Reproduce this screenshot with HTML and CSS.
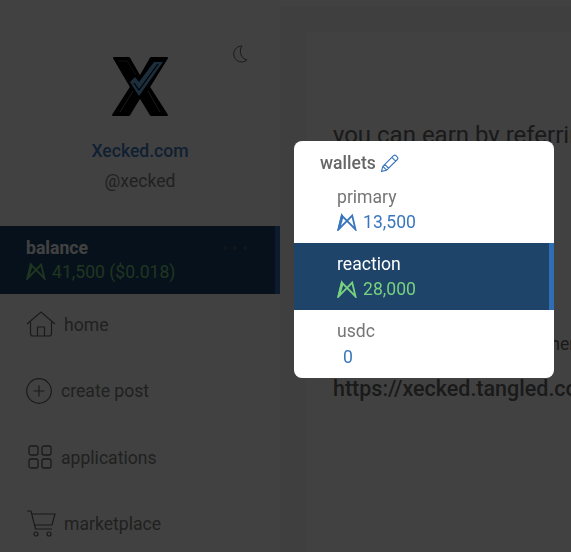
FILE: index.html
```html
<!DOCTYPE html>
<html lang="en">
  <head>
    <meta charset="UTF-8" />
    <title>Xecked wallets</title>
    <link rel="stylesheet" href="styles.css">
  </head>
  <body>
    <div class="topbar"></div>
    <div class="page">
      <aside class="sidebar">
        <div class="profile">
          <svg class="logo" viewBox="0 0 56 60" width="56" height="60">
            <path d="M2 1H17L28 20L39 1H55L37 30L55 58H39L28 40L17 58H1L19 30Z" fill="#000" stroke="#000" stroke-width="2" stroke-linejoin="round"/>
            <path d="M6 4H15L24 18" fill="none" stroke="#303c46" stroke-width="1"/>
            <path d="M8 55L21 34M36 34L48 55" fill="none" stroke="#77838c" stroke-width=".8"/>
            <path d="M18 25L27 39L51 5H42L27 25L23 20Z" fill="#6fb4e6"/>
            <path d="M22 26L27 33L46 7" fill="none" stroke="#000" stroke-width="1.200"/>
          </svg>
          <svg class="moon" viewBox="0 0 16 18" width="16" height="18">
            <path d="M10 1A8 8 0 1 0 15 15A9 9 0 0 1 10 1Z" fill="none" stroke="#666" stroke-width="1"/>
          </svg>
          <div class="site-name">Xecked.com</div>
          <div class="handle">@xecked</div>
        </div>
        <div class="balance">
          <div class="balance-text">
            <div class="balance-label">balance</div>
            <div class="balance-amount">
              <svg class="token" viewBox="0 0 20 18" width="20" height="18"><use href="#token"/></svg>
              41,500 ($0.018)
            </div>
          </div>
          <div class="dots">
            <span></span><span></span><span></span>
          </div>
        </div>
        <nav class="nav">
          <a class="nav-item">
            <svg viewBox="0 0 30 26" width="30" height="26" class="nav-icon">
              <path d="M1 13L15 1L29 13M4.500 11V22.500Q4.500 25 7 25H23Q25.500 25 25.500 22.500V11M11.500 25V16H18.500V25" fill="none" stroke="#666" stroke-width="1.200"/>
            </svg>
            <span>home</span>
          </a>
          <a class="nav-item">
            <svg viewBox="0 0 26 26" width="26" height="26" class="nav-icon nav-icon-plus">
              <circle cx="13" cy="13" r="12.300" fill="none" stroke="#666" stroke-width="1.200"/>
              <path d="M13 7.500V18.500M7.500 13H18.500" stroke="#666" stroke-width="1.200"/>
            </svg>
            <span>create post</span>
          </a>
          <a class="nav-item">
            <svg viewBox="0 0 24 24" width="24" height="24" class="nav-icon nav-icon-apps">
              <rect x="1" y="1" width="9" height="9" rx="2" fill="none" stroke="#666" stroke-width="1.300"/>
              <rect x="14" y="1" width="9" height="9" rx="2" fill="none" stroke="#666" stroke-width="1.300"/>
              <rect x="1" y="14" width="9" height="9" rx="2" fill="none" stroke="#666" stroke-width="1.300"/>
              <rect x="14" y="14" width="9" height="9" rx="2" fill="none" stroke="#666" stroke-width="1.300"/>
            </svg>
            <span>applications</span>
          </a>
          <a class="nav-item">
            <svg viewBox="0 0 30 27" width="30" height="27" class="nav-icon">
              <path d="M1 1H5L9.500 19H26M6 4H29L26 15H8.500" fill="none" stroke="#666" stroke-width="1.200"/>
              <circle cx="10" cy="24" r="2" fill="none" stroke="#666" stroke-width="1.200"/>
              <circle cx="23" cy="24" r="2" fill="none" stroke="#666" stroke-width="1.200"/>
            </svg>
            <span>marketplace</span>
          </a>
        </nav>
      </aside>
      <div class="content-wrap">
        <main class="content">
          <p class="earn">you can earn by referring your friends</p>
          <p class="share">share this link with others whenever</p>
          <p class="ref-link">https://xecked.tangled.com</p>
        </main>
      </div>
    </div>

    <div class="overlay"></div>

    <div class="wallets">
      <div class="wallets-title">
        wallets
        <svg viewBox="0 0 20 20" width="19" height="19">
          <path d="M1.500 18.500L3 13L14.500 1.500Q15.500 .8 16.500 1.500L18.500 3.500Q19.200 4.500 18.500 5.500L7 17ZM3 13L7 17M12.500 3.500L16.500 7.500M5 11L9 15" fill="none" stroke="#3a76bd" stroke-width="1.200" stroke-linejoin="round"/>
        </svg>
      </div>
      <div class="wallet">
        <div class="wallet-name">primary</div>
        <div class="wallet-amount">
          <svg class="token" viewBox="0 0 20 18" width="20" height="18"><use href="#token"/></svg>
          13,500
        </div>
      </div>
      <div class="wallet wallet-active">
        <div class="wallet-name">reaction</div>
        <div class="wallet-amount">
          <svg class="token" viewBox="0 0 20 18" width="20" height="18"><use href="#token"/></svg>
          28,000
        </div>
      </div>
      <div class="wallet">
        <div class="wallet-name">usdc</div>
        <div class="wallet-amount wallet-amount-plain">0</div>
      </div>
    </div>

    <svg class="defs" width="0" height="0">
      <defs>
        <g id="token">
          <path d="M1.500 16.500L4.800 2.500L18.500 16.500L15.200 2.500Z" fill="none" stroke="currentColor" stroke-width="1.800" stroke-linejoin="miter"/>
          <path d="M0 18L4.500 0L6.500 4L3 16Z" fill="currentColor"/>
        </g>
      </defs>
    </svg>
  </body>
</html>
```

FILE: styles.css
```css
* {
  margin: 0;
  padding: 0;
  box-sizing: border-box;
}

html,
body {
  height: 552px;
  overflow: hidden;
}

body {
  background-color: #fff;
  font-family: "Roboto", "Liberation Sans", sans-serif;
  font-size: 17.6px;
  color: #808080;
}

.topbar {
  height: 7px;
}

.page {
  display: flex;
  height: 545px;
}

.sidebar {
  width: 280px;
  flex-shrink: 0;
  background: #fff;
}

.profile {
  position: relative;
  display: flex;
  flex-direction: column;
  align-items: center;
  height: 219px;
  padding-top: 50px;
}

.logo {
  margin-bottom: 22px;
}

.moon {
  position: absolute;
  top: 38px;
  left: 232px;
}

.site-name {
  font-weight: 500;
  color: #3f7dc5;
  line-height: 24px;
  margin-bottom: 6px;
}

.handle {
  line-height: 24px;
}

.balance {
  display: flex;
  justify-content: space-between;
  height: 68px;
  padding: 10px 28px 0 26px;
  background: #1f4469;
  border-right: 5px solid #2f6db5;
}

.balance-label {
  font-weight: 700;
  line-height: 24px;
  color: #fff;
}

.balance-amount {
  display: flex;
  align-items: center;
  gap: 6px;
  line-height: 25px;
  color: #77d17f;
}

.balance-amount .token {
  margin-bottom: 3px;
}

.dots {
  display: flex;
  gap: 6px;
  padding-top: 10px;
}

.dots span {
  width: 4px;
  height: 4px;
  border-radius: 50%;
  background: #4a5560;
}

.nav {
  display: flex;
  flex-direction: column;
  padding: 17px 0 0 26px;
  gap: 40.5px;
}

.nav-item {
  display: flex;
  align-items: center;
  gap: 8px;
  height: 26px;
}

.nav-item span {
  padding-top: 1px;
}

.nav-icon-plus {
  margin-right: 1px;
}

.nav-icon-apps {
  margin: 0 1px 0 2px;
}

.content-wrap {
  flex: 1;
  min-width: 0;
  padding: 25px 0 0 26px;
  background: #f5f7f9;
}

.content {
  height: 100%;
  padding: 88px 0 0 27px;
  white-space: nowrap;
  overflow: hidden;
  background: #fff;
}

.earn {
  font-size: 24px;
  line-height: 30px;
  color: #666;
}

.share {
  line-height: 22px;
  margin-top: 183px;
  color: #666;
}

.ref-link {
  margin-top: 22px;
  font-size: 21.5px;
  font-weight: 500;
  line-height: 24px;
  color: #666;
}

.overlay {
  position: fixed;
  inset: 0;
  background: rgba(0, 0, 0, 0.745);
}

.wallets {
  position: fixed;
  top: 141px;
  left: 294px;
  width: 260px;
  height: 237px;
  background: #fff;
  border-radius: 8px;
  overflow: hidden;
}

.wallets-title {
  display: flex;
  align-items: center;
  gap: 4px;
  height: 35px;
  padding: 9px 0 0 26px;
  font-weight: 500;
  color: #666;
}

.wallet {
  height: 67px;
  padding: 9px 0 0 43px;
}

.wallet-name {
  line-height: 25px;
  color: #757575;
}

.wallet-amount {
  display: flex;
  align-items: center;
  gap: 6px;
  line-height: 25px;
  color: #3a76bd;
}

.wallet-amount .token {
  margin-bottom: 2px;
}

.wallet-amount-plain {
  padding: 1px 0 0 6px;
}

.wallet-active {
  background: #1f4469;
  border-right: 5px solid #2f6db5;
}

.wallet-active .wallet-name {
  color: #fff;
}

.wallet-active .wallet-amount {
  color: #77d17f;
}

.defs {
  position: absolute;
}
```
